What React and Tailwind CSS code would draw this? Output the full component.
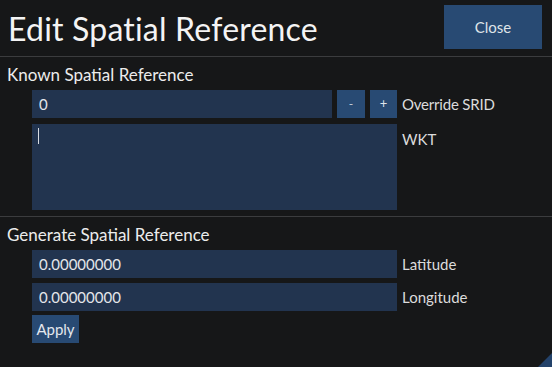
import React from "react";

function Field({ value, className = "" }) {
  return (
    <div className={`h-[28px] bg-[#22344f] flex items-center px-[7px] text-[15px] text-[#e4e6ea] ${className}`}>
      {value}
    </div>
  );
}

function Label({ children, className = "" }) {
  return <div className={`ml-[5px] text-[15px] leading-[18px] text-[#dcdcdc] ${className}`}>{children}</div>;
}

export default function App() {
  return (
    <div
      className="relative w-[552px] h-[367px] overflow-hidden bg-[#161718] text-[#eeeeee]"
      style={{ fontFamily: "Lato, 'Noto Sans', sans-serif" }}
    >
      {/* header */}
      <div className="h-[56px] flex justify-between items-start">
        <div className="mt-[10px] ml-[8px] text-[32px] leading-[38px] tracking-[0.2px] text-[#f4f4f4]">Edit Spatial Reference</div>
        <button className="mt-[5px] mr-[10px] w-[98px] h-[44px] bg-[#284a73] text-[15px] text-[#dfe3e8]">Close</button>
      </div>
      <div className="h-px bg-[#3b3c3e]" />

      {/* known */}
      <div className="h-[33px] pt-[8px] pl-[7px] text-[17px] leading-[20px] text-[#ececec]">Known Spatial Reference</div>
      <div className="pl-[32px]">
        <div className="flex items-center">
          <Field value="0" className="w-[300px]" />
          <button className="ml-[5px] w-[28px] h-[28px] bg-[#284a73] text-[12px] text-[#c8d2de]">-</button>
          <button className="ml-[5px] w-[27px] h-[28px] bg-[#284a73] text-[13px] text-[#dfe5ec]">+</button>
          <Label className="tracking-[-0.2px]">Override SRID</Label>
        </div>
        <div className="mt-[6px] flex items-start">
          <div className="w-[365px] h-[86px] bg-[#22344f] pl-[6px] pt-[4px]">
            <div className="w-px h-[16px] bg-[#d8dce2]" />
          </div>
          <Label className="pt-[6px]">WKT</Label>
        </div>
      </div>
      <div className="mt-[6px] h-px bg-[#3b3c3e]" />

      {/* generate */}
      <div className="h-[33px] pt-[8px] pl-[7px] text-[17px] leading-[20px] text-[#ececec]">Generate Spatial Reference</div>
      <div className="pl-[32px]">
        <div className="flex items-center">
          <Field value="0.00000000" className="w-[365px]" />
          <Label>Latitude</Label>
        </div>
        <div className="mt-[5px] flex items-center">
          <Field value="0.00000000" className="w-[365px]" />
          <Label>Longitude</Label>
        </div>
        <button className="mt-[4px] w-[47px] h-[28px] bg-[#284a73] text-[15px] text-[#e4e8ee]">Apply</button>
      </div>

      {/* resize grip */}
      <svg className="absolute right-0 bottom-0" width="14" height="14" viewBox="0 0 14 14">
        <polygon points="14,0 14,14 0,14" fill="#23426a" />
      </svg>
    </div>
  );
}
